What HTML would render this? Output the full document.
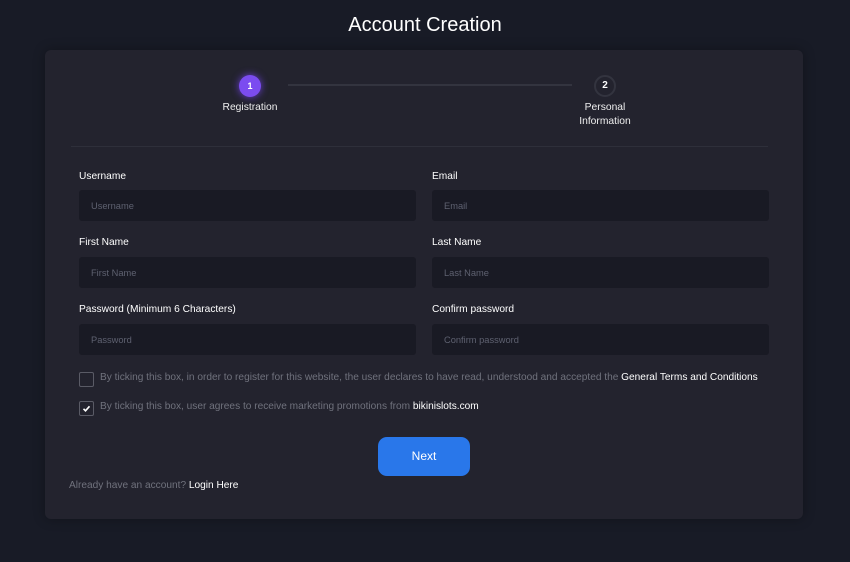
<!DOCTYPE html>
<html><head><style>
*{box-sizing:border-box;margin:0;padding:0}
body{width:850px;height:562px;background:#181b26;font-family:"Liberation Sans",sans-serif;position:relative;overflow:hidden;color:#fff}
h1{position:absolute;top:14px;left:0;width:850px;text-align:center;font-size:20px;font-weight:normal;color:#fff}
.card{position:absolute;left:45px;top:50px;width:758px;height:469px;background:#23232e;border-radius:6px;box-shadow:0 0 12px rgba(0,0,0,.3)}
.abs{position:absolute}
.c1{left:239px;top:75px;width:22px;height:22px;border-radius:50%;background:#7b4cf0;box-shadow:0 0 8px #6a3fd8;font-size:9px;text-align:center;line-height:22px;font-weight:bold}
.c2{left:594px;top:75px;width:22px;height:22px;border-radius:50%;border:2px solid #33343f;font-size:10px;text-align:center;line-height:18px;font-weight:bold}
.line{left:288px;top:84px;width:284px;height:2px;background:#33343f}
.st{font-size:10.3px;color:#eee;text-align:center;line-height:14px}
.hr{left:71px;top:146px;width:697px;height:1px;background:#2e2f3a}
.lbl{font-size:10.2px;color:#fff}
.in{width:337px;height:31px;background:#191a24;border-radius:3px;font-size:9.3px;color:#5e6170;padding:11px 12px 0}
.cb{width:15px;height:15px;border:1px solid #5a5b66;border-radius:2px}
.t{font-size:10.15px;color:#70727d;white-space:nowrap}
.t b{color:#fff;font-weight:normal}
.btn{left:378px;top:437px;width:92px;height:39px;background:#2977ea;border-radius:9px;font-size:12px;text-align:center;line-height:39px}
</style></head><body>
<h1>Account Creation</h1>
<div class="card"></div>
<div class="abs line"></div>
<div class="abs c1">1</div>
<div class="abs c2">2</div>
<div class="abs st" style="left:210px;top:101px;width:80px">Registration</div>
<div class="abs st" style="left:565px;top:101px;width:80px">Personal<br>Information</div>
<div class="abs hr"></div>
<div class="abs lbl" style="left:79px;top:171px">Username</div>
<div class="abs lbl" style="left:432px;top:171px">Email</div>
<div class="abs in" style="left:79px;top:190px">Username</div>
<div class="abs in" style="left:432px;top:190px">Email</div>
<div class="abs lbl" style="left:79px;top:237px">First Name</div>
<div class="abs lbl" style="left:432px;top:237px">Last Name</div>
<div class="abs in" style="left:79px;top:257px">First Name</div>
<div class="abs in" style="left:432px;top:257px">Last Name</div>
<div class="abs lbl" style="left:79px;top:304px">Password (Minimum 6 Characters)</div>
<div class="abs lbl" style="left:432px;top:304px">Confirm password</div>
<div class="abs in" style="left:79px;top:324px">Password</div>
<div class="abs in" style="left:432px;top:324px">Confirm password</div>
<div class="abs cb" style="left:79px;top:372px"></div>
<div class="abs t" style="left:100px;top:372px">By ticking this box, in order to register for this website, the user declares to have read, understood and accepted the <b>General Terms and Conditions</b></div>
<div class="abs cb" style="left:79px;top:401px"><svg width="13" height="13" viewBox="0 0 13 13"><path d="M3.5 6.8l2 2 4-4.5" stroke="#fff" stroke-width="1.6" fill="none"/></svg></div>
<div class="abs t" style="left:100px;top:401px">By ticking this box, user agrees to receive marketing promotions from <b>bikinislots.com</b></div>
<div class="abs btn">Next</div>
<div class="abs t" style="left:69px;top:480px">Already have an account? <b>Login Here</b></div>
</body></html>
